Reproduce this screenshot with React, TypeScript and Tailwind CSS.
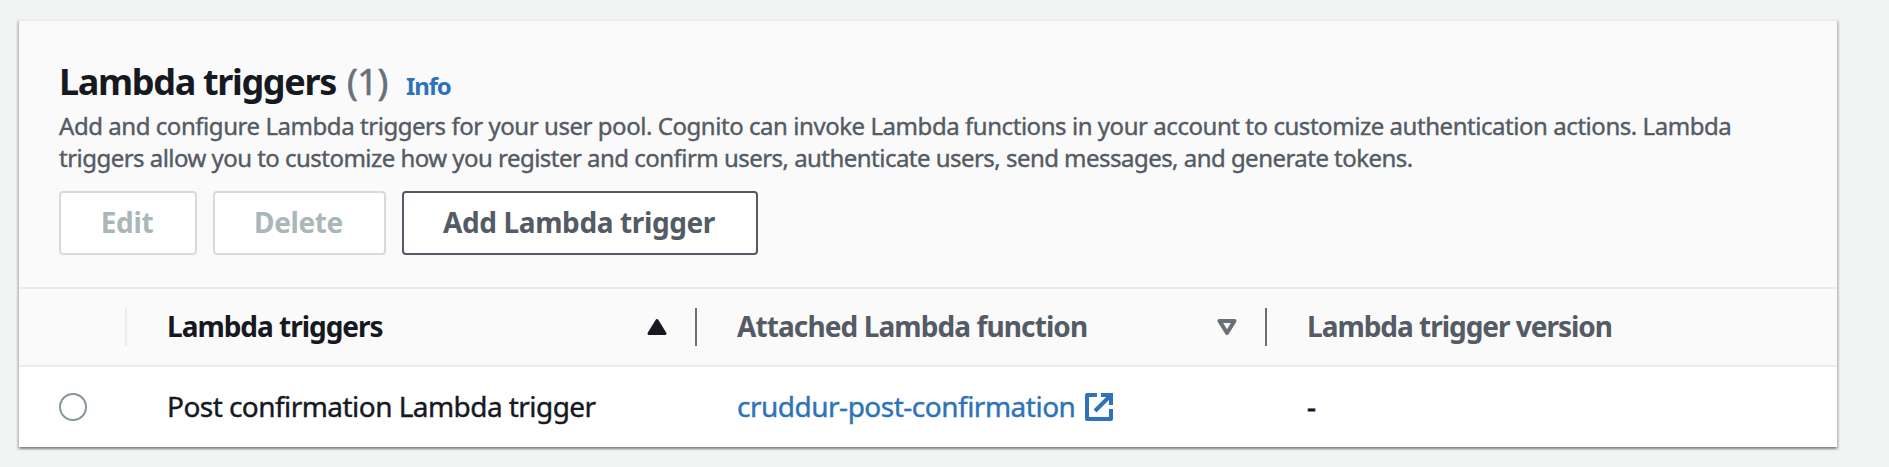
import type { ReactNode } from "react";

function SortAscending() {
  return (
    <svg className="h-5 w-5" viewBox="0 0 20 20" fill="#16191f" stroke="#16191f" strokeWidth="3" strokeLinejoin="round">
      <path d="M10 3.5 L18 16.5 H2 Z" />
    </svg>
  );
}

function SortIdle() {
  return (
    <svg className="h-5 w-5" viewBox="0 0 20 20" fill="none" stroke="#687078" strokeWidth="4" strokeLinejoin="round">
      <path d="M2.5 4 H17.5 L10 16 Z" />
    </svg>
  );
}

function ExternalIcon() {
  return (
    <svg className="h-7 w-7" viewBox="0 0 28 28" fill="none" stroke="#2e73b8" strokeWidth="4">
      <path d="M12 2 H2 V26 H26 V16" strokeLinejoin="round" />
      <path d="M16 2 H26 V12" />
      <path d="M26 2 L10 18" />
    </svg>
  );
}

function HeaderCell({ children, icon, className }: { children: ReactNode; icon?: ReactNode; className: string }) {
  return (
    <div className={`flex items-center justify-between pl-10 ${className}`}>
      <span className="pb-0.5 text-[28px] leading-8 font-bold whitespace-nowrap">{children}</span>
      {icon}
    </div>
  );
}

export default function App() {
  return (
    <main className="flex h-[467px] w-full items-start bg-[#f2f3f3] pt-[19px] pl-[19px] font-['Noto_Sans','Open_Sans',sans-serif] text-[#16191f]">
      <section className="h-[428px] w-[1818px] border-t-2 border-[#eaeded] bg-white shadow-[0_2px_2px_0_rgba(0,28,36,0.3),2px_2px_2px_0_rgba(0,28,36,0.15),-2px_2px_2px_0_rgba(0,28,36,0.15)]">
        <header className="h-[266px] bg-[#fafafa] px-10 pt-[39px]">
          <div className="flex h-[50px] items-baseline leading-[44px] whitespace-nowrap">
            <h2 className="text-[36px] font-bold tracking-[-1.33px]">Lambda triggers</h2>
            <span className="ml-[11px] text-[36px] tracking-[-0.4px] text-[#687078] [-webkit-text-stroke:0.6px]">(1)</span>
            <a className="ml-[18px] text-[24px] font-bold tracking-[-1.1px] text-[#2e73b8]">Info</a>
          </div>
          <p className="w-[1700px] text-[24px] leading-8 tracking-[-0.45px] text-[#545b64] [-webkit-text-stroke:0.4px]">
            Add and configure Lambda triggers for your user pool. Cognito can invoke Lambda functions in your account to
            customize authentication actions. Lambda{" "}
            <span className="tracking-[-0.53px]">
              triggers allow you to customize how you register and confirm users, authenticate users, send messages, and
              generate tokens.
            </span>
          </p>
          <div className="mt-[17px] flex gap-4 text-[28px] font-bold tracking-[-0.38px]">
            <button className="h-16 w-[138px] rounded-[4px] border-2 border-[#d5dbdb] bg-white pr-0.5 pb-0.5 text-[#aab7b8]">Edit</button>
            <button className="h-16 w-[173px] rounded-[4px] border-2 border-[#d5dbdb] bg-white pr-0.5 pb-0.5 text-[#aab7b8]">Delete</button>
            <button className="h-16 w-[356px] rounded-[4px] border-2 border-[#545b64] bg-white pr-0.5 pb-0.5 text-[#545b64]">
              Add Lambda trigger
            </button>
          </div>
        </header>
        <div className="flex h-20 items-center border-y-2 border-[#eaeded] bg-[#fafafa]">
          <div className="h-[38px] w-[108px] border-r-2 border-[#eaeded]" />
          <HeaderCell className="h-[38px] w-[570px] border-r-2 border-[#687078] pr-7 tracking-[-1.02px]" icon={<SortAscending />}>
            Lambda triggers
          </HeaderCell>
          <HeaderCell className="h-[38px] w-[570px] border-r-2 border-[#687078] pr-7 tracking-[-0.9px] text-[#545b64]" icon={<SortIdle />}>
            Attached Lambda function
          </HeaderCell>
          <HeaderCell className="tracking-[-1.02px] text-[#545b64]">Lambda trigger version</HeaderCell>
        </div>
        <div className="flex h-20 items-center text-[28px] leading-8">
          <div className="flex w-[108px] pl-10">
            <span className="h-7 w-7 rounded-full border-2 border-[#879596] bg-white" />
          </div>
          <div className="w-[570px] pb-0.5 pl-10 tracking-[-0.55px] [-webkit-text-stroke:0.4px]">Post confirmation Lambda trigger</div>
          <div className="flex w-[570px] items-center gap-[10px] pl-10 text-[#2e73b8]">
            <a className="pb-0.5 tracking-[-0.5px] [-webkit-text-stroke:0.4px]">cruddur-post-confirmation</a>
            <ExternalIcon />
          </div>
          <div className="pb-0.5 pl-10 [-webkit-text-stroke:0.8px]">-</div>
        </div>
      </section>
    </main>
  );
}
